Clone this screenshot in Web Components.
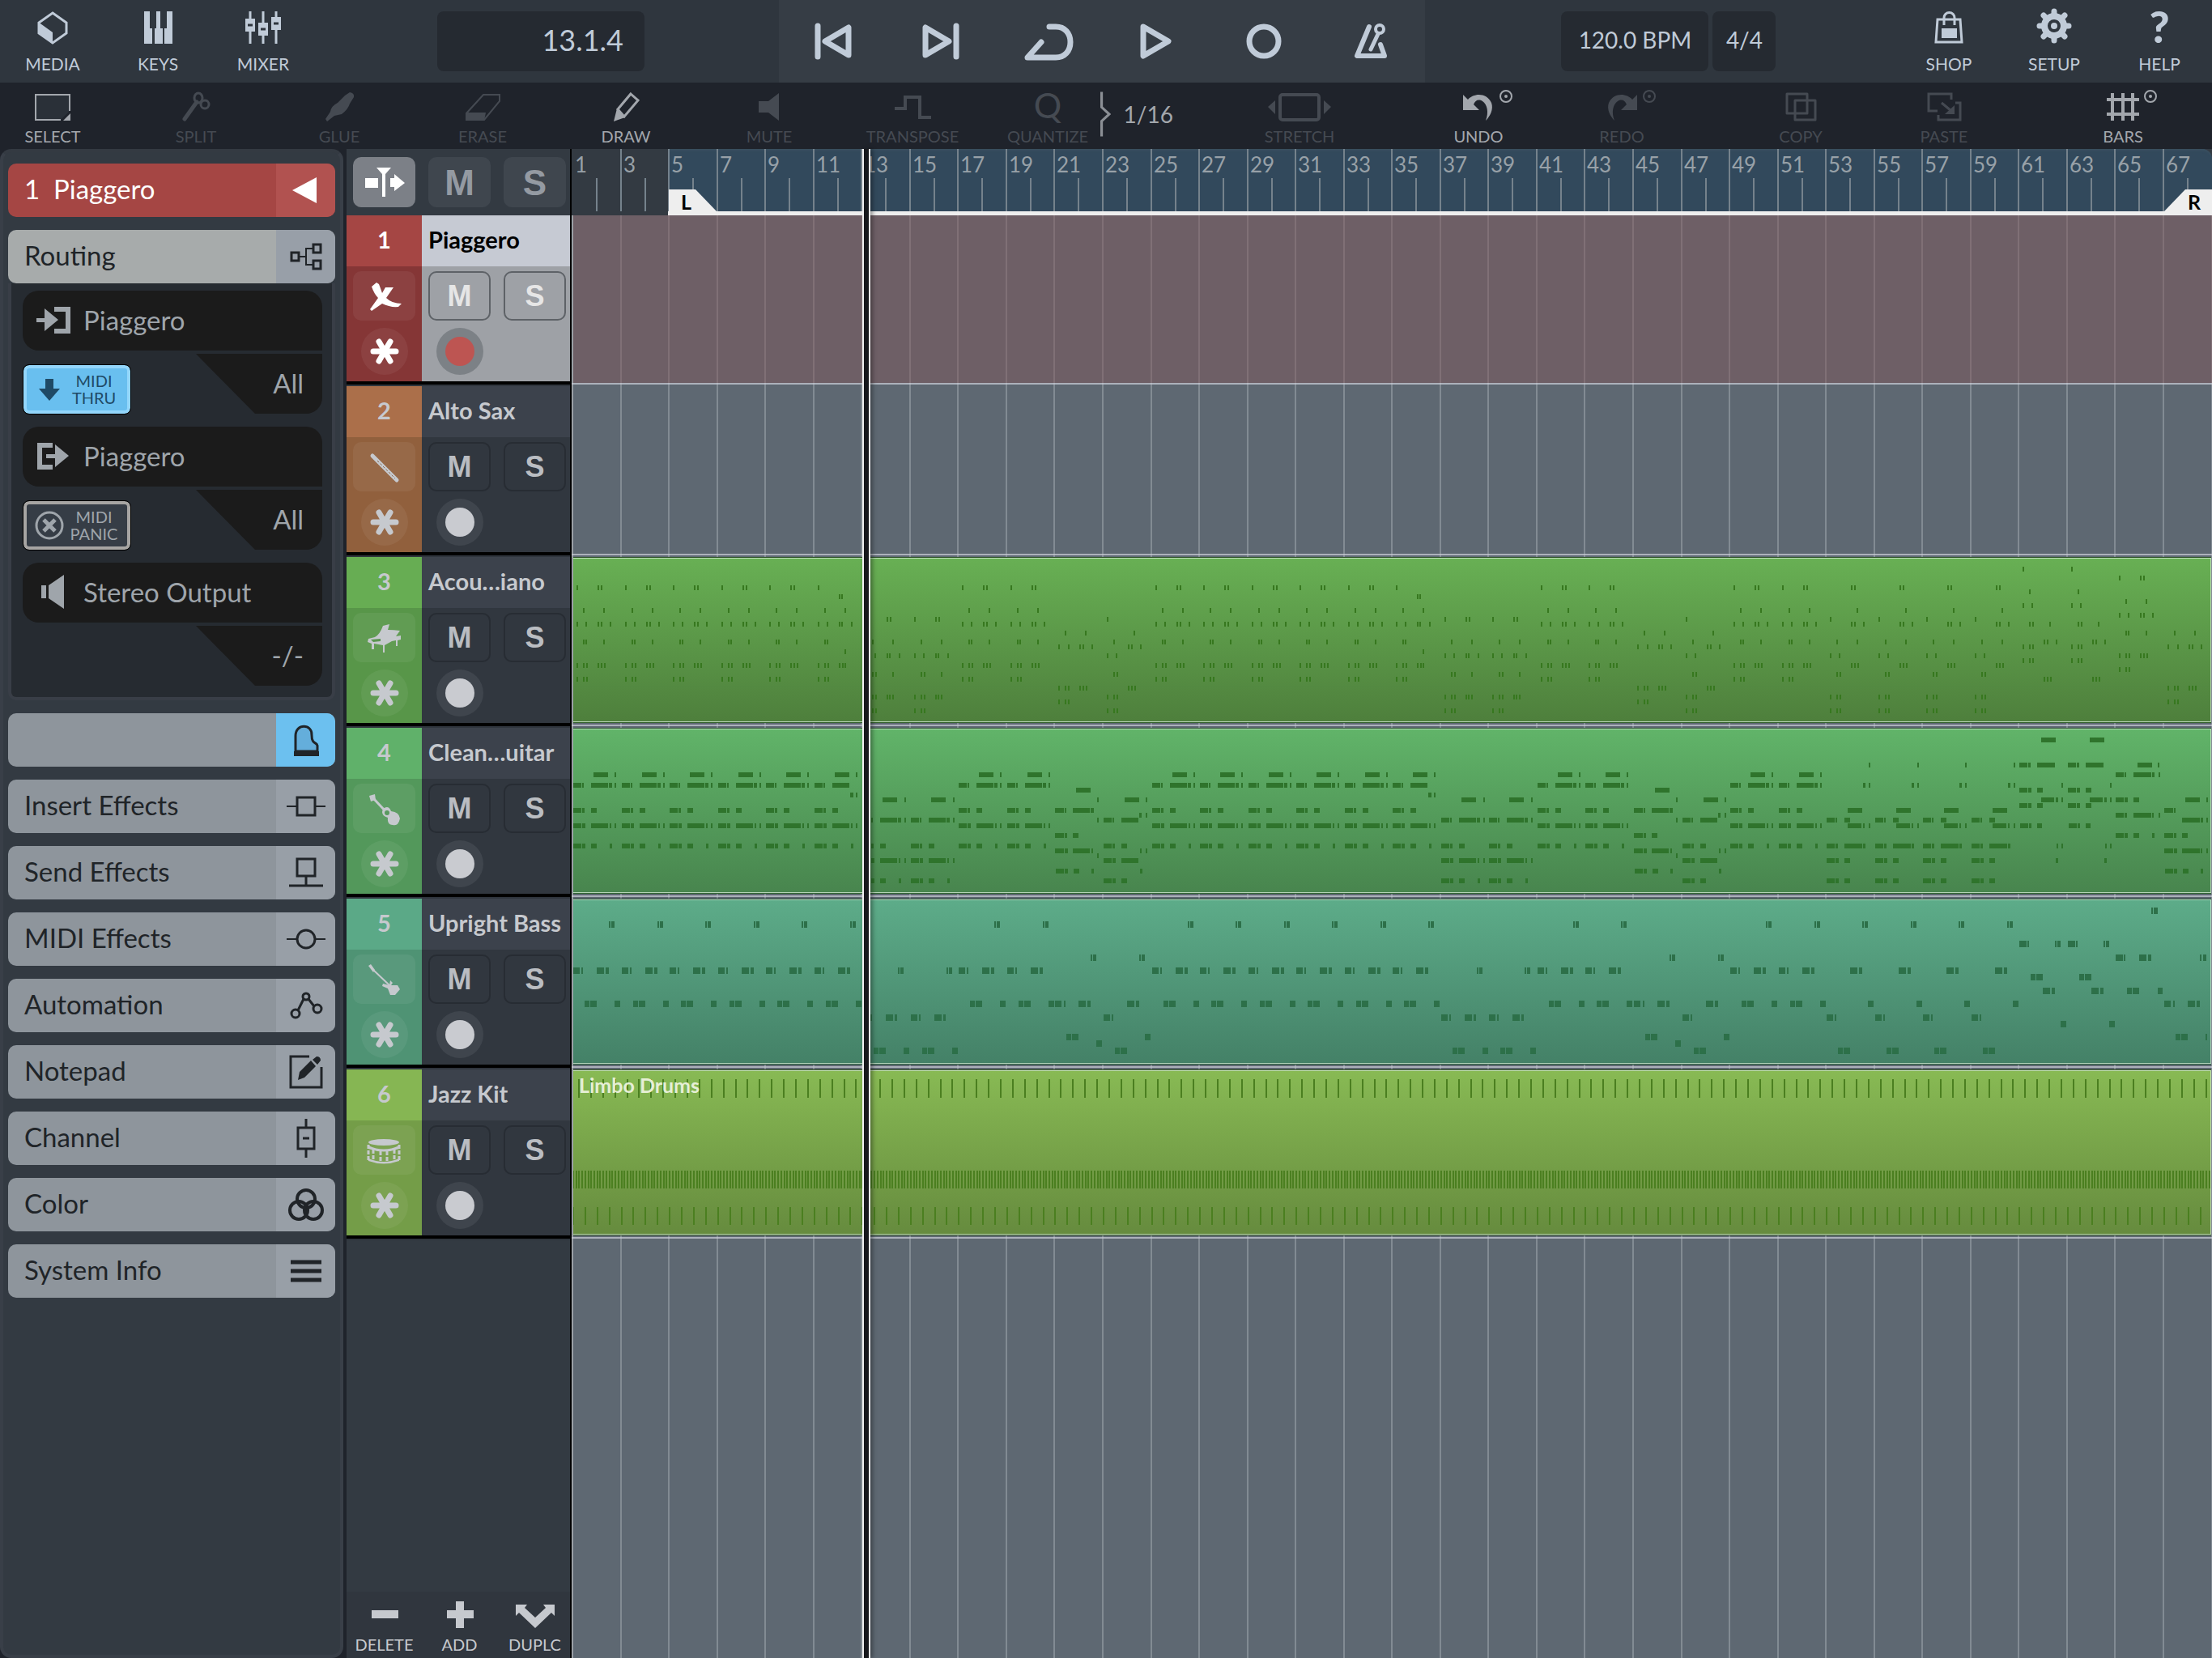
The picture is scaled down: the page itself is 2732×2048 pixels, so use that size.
<!DOCTYPE html>
<html lang="en">
<head>
<meta charset="utf-8">
<title>Arrange</title>
<style>
    html, body { height: 100%; }
    body {
        margin: 0;
        background: #1f232b;
        color: #c0cbd8;
        font-family: Lato, "Open Sans", sans-serif;
        overflow: hidden;
    }
</style>
</head>
<body>
<daw-app></daw-app>

<script>
// every icon: [width, height, markup]
const icons = {
    media: [40, 40, '<path d="M20 2 37 14V27L20 39 3 27V14z" fill="none" stroke="currentColor" stroke-width="3"/><path d="M2 13 20 26V40L2 27z" fill="currentColor"/>'],
    keys: [40, 40, '<path d="M3 0H10V21H13V40H3zM18 0H23V21H26V40H16V21H18zM31 0H38V40H28V21H31z" fill="currentColor"/>'],
    mixer: [44, 40, '<path d="M6 0V40M22 0V40M38 0V40" stroke="currentColor" stroke-width="3"/><path d="M0 9H12V25H0zM16 14H28V30H16zM32 7H44V23H32z" fill="currentColor"/><path d="M3 17H9M19 22H25M35 15H41" stroke="#2f363e" stroke-width="3"/>'],
    prev: [48, 48, '<path d="M5 5V43" stroke="currentColor" stroke-width="7" stroke-linecap="round"/><path d="M14 24 43 7V41z" fill="none" stroke="currentColor" stroke-width="7" stroke-linejoin="round"/>'],
    next: [48, 48, '<path d="M43 5V43" stroke="currentColor" stroke-width="7" stroke-linecap="round"/><path d="M34 24 5 7V41z" fill="none" stroke="currentColor" stroke-width="7" stroke-linejoin="round"/>'],
    loop: [64, 48, '<path d="M33 6H41C52 6 59 14 59 25S52 44 41 44H6L23 25" fill="none" stroke="currentColor" stroke-width="7" stroke-linecap="round" stroke-linejoin="round"/>'],
    play: [48, 48, '<path d="M8 6 39 24 8 42z" fill="none" stroke="currentColor" stroke-width="7" stroke-linejoin="round"/>'],
    record: [48, 48, '<circle cx="24" cy="24" r="18" fill="none" stroke="currentColor" stroke-width="7"/>'],
    metronome: [48, 48, '<path d="M21 6 6 42H40L35 28" fill="none" stroke="currentColor" stroke-width="6" stroke-linecap="round" stroke-linejoin="round"/><circle cx="34" cy="9" r="5" fill="none" stroke="currentColor" stroke-width="4"/><path d="M32 15 23 34" stroke="currentColor" stroke-width="5" stroke-linecap="round"/>'],
    shop: [40, 40, '<path d="M6 10H34L36 38H4z" fill="none" stroke="currentColor" stroke-width="3"/><path d="M14 17V8A6 6 0 0 1 27 8V17" fill="none" stroke="currentColor" stroke-width="3"/><path d="M11 21H30V33H11z" fill="currentColor"/>'],
    setup: [44, 44, '<circle cx="22" cy="22" r="12" fill="none" stroke="currentColor" stroke-width="8"/><path d="M22 4V9M22 35V40M4 22H9M35 22H40M9 9 12 12M32 32 35 35M35 9 32 12M12 32 9 35" stroke="currentColor" stroke-width="7" stroke-linecap="round"/><circle cx="22" cy="22" r="4" fill="currentColor"/>'],
    help: [40, 40, '<text x="20" y="39" text-anchor="middle" font-size="54" font-weight="900" fill="currentColor">?</text>'],

    select: [48, 36, '<path d="M2 2H46V22L34 34H2z" fill="#2a3038"/><path d="M45 23V3H3V34H34" fill="none" stroke="currentColor" stroke-width="2"/><path d="M46 26V35H37z" fill="currentColor"/>'],
    split: [48, 36, '<path d="M25 12 10 33" stroke="currentColor" stroke-width="5" stroke-linecap="round"/><ellipse cx="27" cy="7" rx="5" ry="6" fill="none" stroke="currentColor" stroke-width="3"/><ellipse cx="35" cy="15" rx="5" ry="5" fill="none" stroke="currentColor" stroke-width="3"/>'],
    glue: [48, 36, '<path d="M37 0Q43 1 42 6L37 14Q35 21 27 27L18 29 9 36 7 33 13 24Q14 17 22 13L31 4z" fill="currentColor"/>'],
    erase: [48, 36, '<path d="M25 3H45V11L26 34H4V26z" fill="none" stroke="currentColor" stroke-width="2"/><path d="M4 25H28L26 35H3z" fill="currentColor"/>'],
    draw: [48, 36, '<path d="M30 2 39 10 22 30 14 21z" fill="none" stroke="currentColor" stroke-width="3"/><path d="M13 20 23 31 9 36z" fill="currentColor"/>'],
    mute: [48, 36, '<path d="M11 11H23L36 1V35L23 25H11z" fill="currentColor"/>'],
    transpose: [48, 36, '<path d="M2 20H15V6H33V31H47" fill="none" stroke="currentColor" stroke-width="4"/>'],
    quantize: [48, 36, '<text x="24" y="32" text-anchor="middle" font-size="43" fill="currentColor">Q</text>'],
    stretch: [80, 36, '<rect x="16" y="3" width="48" height="31" rx="3" fill="none" stroke="currentColor" stroke-width="4"/><path d="M10 10V27L1 18zM70 10V27L79 18z" fill="currentColor"/>'],
    undo: [48, 36, '<path d="M5 3 11 9C18 1 34 0 40 13C43 21 38 30 33 35C37 25 35 15 29 11C24 8 20 10 18 15L25 22H5z" fill="currentColor"/><circle cx="58" cy="5" r="7" fill="none" stroke="currentColor" stroke-width="2"/><circle cx="58" cy="5" r="2" fill="currentColor"/>'],
    redo: [48, 36, '<path d="M43 3 37 9C30 1 14 0 8 13C5 21 10 30 15 35C11 25 13 15 19 11C24 8 28 10 30 15L23 22H43z" fill="currentColor"/><circle cx="58" cy="5" r="7" fill="none" stroke="currentColor" stroke-width="2"/><circle cx="58" cy="5" r="2" fill="currentColor"/>'],
    copy: [48, 36, '<path d="M7 2H32V26H7zM17 10H42V34H17z" fill="none" stroke="currentColor" stroke-width="3" stroke-linejoin="round"/>'],
    paste: [48, 36, '<path d="M33 9V2H5V23H16M38 13H44V34H17V28M21 13 33 23" fill="none" stroke="currentColor" stroke-width="3"/><path d="M37 16V27H25z" fill="currentColor"/>'],
    bars: [48, 36, '<path d="M11 1V35M24 1V35M36 1V35M4 9H44M4 27H44" stroke="currentColor" stroke-width="4"/><circle cx="58" cy="5" r="7" fill="none" stroke="currentColor" stroke-width="2"/><circle cx="58" cy="5" r="2" fill="currentColor"/>'],

    back: [30, 32, '<path d="M28 0V32L-2 16z" fill="currentColor"/>'],
    routing: [40, 32, '<path d="M2 11H11V21H2zM29 1H38V11H29zM29 21H38V31H29z" fill="none" stroke="currentColor" stroke-width="3"/><path d="M12 16H20M28 6H20V26H28" fill="none" stroke="currentColor" stroke-width="2"/>'],
    instrument: [36, 40, '<path d="M5 34V15C5 -1 26 0 25 14C25 26 31 22 32 27V34z" fill="#64aedb" stroke="currentColor" stroke-width="3"/><path d="M3 34H34V40H3z" fill="currentColor"/>'],
    insert: [48, 40, '<path d="M13 9H35V31H13z" fill="none" stroke="currentColor" stroke-width="3"/><path d="M0 20H13M35 20H48" stroke="currentColor" stroke-width="2"/>'],
    send: [48, 40, '<path d="M13 3H35V24H13zM24 24V36" fill="none" stroke="currentColor" stroke-width="3"/><path d="M3 36H45" stroke="currentColor" stroke-width="3"/>'],
    midi: [48, 40, '<circle cx="24" cy="20" r="11" fill="none" stroke="currentColor" stroke-width="3"/><path d="M0 20H13M35 20H48" stroke="currentColor" stroke-width="2"/>'],
    automation: [40, 40, '<g fill="none" stroke="currentColor" stroke-width="3"><circle cx="20" cy="9" r="4"/><circle cx="7" cy="30" r="5"/><circle cx="34" cy="24" r="5"/><path d="M17 12 10 26M23 12 30 21"/></g>'],
    notepad: [40, 40, '<path d="M24 1H1V39H39V14" fill="none" stroke="currentColor" stroke-width="3"/><path d="M10 30 12 20 26 6 32 13 18 27zM28 5 33 1Q38 1 38 6L34 11z" fill="currentColor"/>'],
    channel: [40, 48, '<path d="M10 11H30V37H10z" fill="none" stroke="currentColor" stroke-width="3"/><path d="M20 0V11M20 37V48M16 24H24" stroke="currentColor" stroke-width="3"/>'],
    color: [44, 40, '<g fill="none" stroke="currentColor" stroke-width="4"><circle cx="22" cy="13" r="11"/><circle cx="13" cy="27" r="11"/><circle cx="31" cy="27" r="11"/></g>'],
    info: [38, 28, '<path d="M0 3H38M0 14H38M0 25H38" stroke="currentColor" stroke-width="5"/>'],

    input: [42, 34, '<path d="M22 4H39V31H22" fill="none" stroke="currentColor" stroke-width="6"/><path d="M0 15H10V3L27 17 10 31V20H0z" fill="currentColor"/>'],
    output: [42, 34, '<path d="M20 4H4V31H20" fill="none" stroke="currentColor" stroke-width="6"/><path d="M12 15H23V3L40 17 23 31V20H12z" fill="currentColor"/>'],
    speaker: [42, 42, '<path d="M6 13H12V29H6zM15 13 34 0V42L15 29z" fill="currentColor"/>'],
    down: [36, 36, '<path d="M13 5H23V17H31L18 32 5 17H13z" fill="currentColor"/>'],
    panic: [36, 36, '<circle cx="18" cy="18" r="16" fill="none" stroke="currentColor" stroke-width="3"/><path d="M11 11 25 25M25 11 11 25" stroke="currentColor" stroke-width="5"/>'],

    follow: [76, 60, '<path d="M15 25H31V37H15zM46 25H51V20L64 31 51 41V36H46zM29 12H47L40 20V48H36V20z" fill="currentColor"/>'],
    synth: [76, 60, '<path d="M29 13 23 18Q26 27 31 32L21 46 23 48 36 39Q46 44 56 43L60 39Q48 39 41 32L50 19H40L36 26Q34 20 32 15z" fill="currentColor"/>'],
    flute: [76, 60, '<path d="M24 16 54 46" stroke="currentColor" stroke-width="5" stroke-linecap="round"/><path d="M30 22 52 44" stroke="#8c6a50" stroke-width="1" stroke-dasharray="3 2"/>'],
    piano: [76, 60, '<path d="M45 13 37 15Q33 26 27 29L19 31 18 35 23 37V44H26V37L37 39V48H39V39L48 34 53 33V40H55V33L59 32V27L53 28 58 21Q50 20 43 20z" fill="currentColor"/><path d="M22 32 34 31V34L25 35z" fill="#5a9550"/>'],
    guitar: [76, 60, '<path d="M20 14 27 12 28 19 22 21z" fill="currentColor"/><path d="M25 17 41 34" stroke="currentColor" stroke-width="3"/><path d="M37 30Q44 25 47 33Q57 34 58 42Q56 52 49 50Q42 50 43 41Q36 39 36 34z" fill="currentColor"/><circle cx="42" cy="35" r="3" fill="#5a9a60"/>'],
    bass: [76, 60, '<path d="M19 13 22 11 27 18 25 21z" fill="currentColor"/><path d="M25 18 46 38" stroke="currentColor" stroke-width="2"/><path d="M46 31 49 34 47 37 55 37 58 42 52 49H46L43 41 36 38 37 35 45 37z" fill="currentColor"/>'],
    drum: [76, 60, '<ellipse cx="38" cy="20" rx="19" ry="4" fill="currentColor"/><path d="M19 24Q38 33 57 24V28Q38 35 19 28zM19 40Q38 48 57 40V43Q38 50 19 43z" fill="currentColor"/><path d="M19 23V43M25 29V43M34 31V44M42 31V44M51 29V43M57 23V43" stroke="currentColor" stroke-width="3" stroke-dasharray="5 2"/>'],
    star: [58, 58, '<path d="M15 29H43M22 17 36 41M36 17 22 41" stroke="currentColor" stroke-width="7" stroke-linecap="round"/>'],
    minus: [48, 40, '<path d="M8 14H41V24H8z" fill="currentColor"/>'],
    plus: [48, 40, '<path d="M8 14H19V3H29V14H41V24H29V36H19V24H8z" fill="currentColor"/>'],
    fork: [48, 40, '<path d="M0 7H14L11 11 24 23 37 11 34 7H48V21L44 17 24 36 4 17 0 21z" fill="currentColor"/>']
};

class BaseElement extends HTMLElement {
    constructor() {
        super();
        this.attachShadow({ mode: 'open' });
    }
    connectedCallback() {
        this.render();
    }
    render() {
        const template = document.createElement('template');
        template.innerHTML = `
            <style>
                * { box-sizing: border-box; }
                button { margin: 0; padding: 0; border: 0; background: none; color: inherit; font: inherit; }
                ${this.getStyles()}
            </style>
            ${this.getTemplate()}
        `;
        this.shadowRoot.appendChild(template.content.cloneNode(true));
    }
    getStyles() {
        return '';
    }
    getTemplate() {
        return '<slot></slot>';
    }
    attr(name) {
        return this.getAttribute(name) || '';
    }
}

class DawIcon extends BaseElement {
    getStyles() {
        return `
            :host { display: block; flex: none; }
            svg { display: block; overflow: visible; font-family: inherit; }
        `;
    }
    getTemplate() {
        const [w, h, markup] = icons[this.attr('name')];
        return `<svg width="${w}" height="${h}" viewBox="0 0 ${w} ${h}" aria-hidden="true">${markup}</svg>`;
    }
}

// icon over a small caption, used in both top bars and under the track list
class IconButton extends BaseElement {
    getStyles() {
        return `
            :host { display: block; flex: none; width: var(--width, 130px); font-size: 21px; line-height: 24px; }
            :host([off]) { color: #454a52; }
            button {
                display: flex;
                flex-direction: column;
                align-items: center;
                justify-content: flex-end;
                gap: var(--gap, 13px);
                width: 100%;
                height: 100%;
            }
        `;
    }
    getTemplate() {
        return `<button ${this.hasAttribute('off') ? 'disabled' : ''}><daw-icon name="${this.attr('icon')}"></daw-icon><slot></slot></button>`;
    }
}

class AppHeader extends BaseElement {
    getStyles() {
        return `
            :host { display: flex; height: 102px; background: #2f363e; }
            .side { display: flex; flex: 106 1 0; align-items: stretch; }
            .side:last-child { flex-grow: 107; }
            .buttons { display: flex; padding-bottom: 11px; }
            .transport { display: flex; flex: none; background: #363d45; }
            .transport button { display: flex; width: 133px; align-items: center; justify-content: center; }
            .display {
                height: 74px;
                margin-top: 14px;
                padding: 0 26px 5px;
                border-radius: 8px;
                background: #252a31;
                font-size: 28px;
                line-height: 66px;
            }
            .counter { width: 256px; margin-left: 150px; text-align: right; font-size: 36px; }
            .tempo { width: 182px; margin-left: 168px; padding: 0 0 5px; }
            .meter { width: 78px; margin-left: 5px; padding: 0 0 5px; }
            .right { margin-left: auto; }
        `;
    }
    getTemplate() {
        return `
            <div class="side">
                <div class="buttons">
                    <icon-button icon="media">MEDIA</icon-button>
                    <icon-button icon="keys">KEYS</icon-button>
                    <icon-button icon="mixer">MIXER</icon-button>
                </div>
                <button class="display counter">13.1.4</button>
            </div>
            <div class="transport">
                <button aria-label="Previous"><daw-icon name="prev"></daw-icon></button>
                <button aria-label="Next"><daw-icon name="next"></daw-icon></button>
                <button aria-label="Cycle"><daw-icon name="loop"></daw-icon></button>
                <button aria-label="Play"><daw-icon name="play"></daw-icon></button>
                <button aria-label="Record"><daw-icon name="record"></daw-icon></button>
                <button aria-label="Metronome"><daw-icon name="metronome"></daw-icon></button>
            </div>
            <div class="side">
                <button class="display tempo">120.0 BPM</button>
                <button class="display meter">4/4</button>
                <div class="buttons right">
                    <icon-button icon="shop">SHOP</icon-button>
                    <icon-button icon="setup">SETUP</icon-button>
                    <icon-button icon="help">HELP</icon-button>
                </div>
            </div>
        `;
    }
}

class ToolBar extends BaseElement {
    getStyles() {
        return `
            :host {
                display: flex;
                justify-content: space-between;
                height: 82px;
                padding: 0 45px 4px 0;
                color: #a3a7ad;
                --gap: 6px;
            }
            .group { display: flex; gap: 47px; }
            icon-button { font-size: 20px; }
            .quantize { --width: 110px; }
            .value { display: flex; align-items: center; gap: 16px; width: 90px; margin-left: -37px; font-size: 28px; }
        `;
    }
    getTemplate() {
        return `
            <div class="group">
                <icon-button icon="select">SELECT</icon-button>
                <icon-button icon="split" off>SPLIT</icon-button>
                <icon-button icon="glue" off>GLUE</icon-button>
                <icon-button icon="erase" off>ERASE</icon-button>
                <icon-button icon="draw">DRAW</icon-button>
                <icon-button icon="mute" off>MUTE</icon-button>
                <icon-button icon="transpose" off>TRANSPOSE</icon-button>
                <icon-button class="quantize" icon="quantize" off>QUANTIZE</icon-button>
                <button class="value">
                    <svg width="16" height="72" viewBox="0 0 16 72" aria-hidden="true"><path d="M2 1V25L14 36 2 47V71" fill="none" stroke="#8b8f95" stroke-width="4"/></svg>
                    1/16
                </button>
            </div>
            <icon-button icon="stretch" off>STRETCH</icon-button>
            <div class="group">
                <icon-button icon="undo">UNDO</icon-button>
                <icon-button icon="redo" off>REDO</icon-button>
            </div>
            <div class="group">
                <icon-button icon="copy" off>COPY</icon-button>
                <icon-button icon="paste" off>PASTE</icon-button>
            </div>
            <icon-button icon="bars">BARS</icon-button>
        `;
    }
}

class PanelButton extends BaseElement {
    getStyles() {
        return `
            :host { display: block; color: #202428; --bg: #8e959c; --cap: #989fa7; }
            :host([kind=track]) { color: #fff; --bg: #a54644; --cap: #b15250; }
            :host([kind=open]) { --bg: #a7abab; --cap: #989fa8; }
            :host([kind=active]) { --cap: #6cc0ef; }
            button {
                display: flex;
                width: 100%;
                height: 66px;
                border-radius: 10px;
                background: var(--bg);
                overflow: hidden;
                font-size: 33px;
                line-height: 62px;
                text-align: left;
                white-space: nowrap;
            }
            .label { flex: 1; padding-left: 20px; }
            .cap { display: grid; place-items: center; width: 73px; height: 100%; background: var(--cap); }
        `;
    }
    getTemplate() {
        return `<button aria-label="${this.attr('label')}"><span class="label"><slot></slot></span><span class="cap"><daw-icon name="${this.attr('icon')}"></daw-icon></span></button>`;
    }
}

class RouteSlot extends BaseElement {
    getStyles() {
        return `
            :host { display: block; color: #9fa5ab; }
            button { font-size: 33px; line-height: 64px; }
            .target {
                display: flex;
                align-items: center;
                gap: 16px;
                width: 100%;
                height: 74px;
                padding-bottom: 2px;
                padding-left: 17px;
                border-radius: 20px 20px 0 20px;
                background: #1b1b1b;
            }
            .row { display: flex; justify-content: space-between; align-items: flex-end; height: 74px; margin-top: 4px; }
            .channel {
                width: 156px;
                height: 74px;
                margin-left: auto;
                padding-right: 23px;
                padding-bottom: 3px;
                border-radius: 0 0 20px 0;
                background: #1b1b1b;
                clip-path: polygon(0 0, 100% 0, 100% 100%, 73px 100%);
                text-align: right;
            }
        `;
    }
    getTemplate() {
        return `
            <button class="target"><daw-icon name="${this.attr('icon')}"></daw-icon>${this.attr('target')}</button>
            <div class="row"><slot></slot><button class="channel">${this.attr('channel')}</button></div>
        `;
    }
}

class MidiSwitch extends BaseElement {
    getStyles() {
        return `
            :host { display: block; }
            button {
                display: flex;
                align-items: center;
                gap: 7px;
                width: 132px;
                height: 60px;
                margin-left: 1px;
                padding-left: 10px;
                border: 4px solid #a7a5a3;
                border-radius: 7px;
                outline: 1px solid #000;
                background: #363d46;
                color: #9fa5ab;
                font-size: 20px;
                line-height: 21px;
            }
            :host([on]) button { border-color: #93d6fb; background: #69bfef; color: #1f4a66; }
            span { width: 60px; text-align: center; }
        `;
    }
    getTemplate() {
        return `<button><daw-icon name="${this.attr('icon')}"></daw-icon><span><slot></slot></span></button>`;
    }
}

class InspectorPanel extends BaseElement {
    getStyles() {
        return `
            :host {
                display: flex;
                flex-direction: column;
                gap: 16px;
                flex: none;
                width: 424px;
                padding: 14px 6px;
                border: 4px solid #393f48;
                border-top-color: #343a42;
                border-radius: 14px;
                background: #333a42;
            }
            .routing {
                display: flex;
                flex-direction: column;
                gap: 16px;
                margin-top: -16px;
                padding: 9px 12px 14px 14px;
                border: 4px solid #393e47;
                border-top: 0;
                border-radius: 0 0 10px 10px;
                background: #262b31;
            }
        `;
    }
    getTemplate() {
        return `
            <panel-button kind="track" icon="back">1&nbsp; Piaggero</panel-button>
            <panel-button kind="open" icon="routing">Routing</panel-button>
            <div class="routing">
                <route-slot icon="input" target="Piaggero" channel="All"><midi-switch icon="down" on>MIDI THRU</midi-switch></route-slot>
                <route-slot icon="output" target="Piaggero" channel="All"><midi-switch icon="panic">MIDI PANIC</midi-switch></route-slot>
                <route-slot icon="speaker" target="Stereo Output" channel="-/-"></route-slot>
            </div>
            <panel-button kind="active" icon="instrument" label="Instrument"></panel-button>
            <panel-button icon="insert">Insert Effects</panel-button>
            <panel-button icon="send">Send Effects</panel-button>
            <panel-button icon="midi">MIDI Effects</panel-button>
            <panel-button icon="automation">Automation</panel-button>
            <panel-button icon="notepad">Notepad</panel-button>
            <panel-button icon="channel">Channel</panel-button>
            <panel-button icon="color">Color</panel-button>
            <panel-button icon="info">System Info</panel-button>
        `;
    }
}

class TrackRow extends BaseElement {
    getStyles() {
        return `
            :host {
                display: grid;
                grid-template-columns: 93px 1fr;
                grid-template-rows: 63px 142px;
                height: 211px;
                border-bottom: 2px solid #2f353d;
                color: #c6c9ce;
                font-size: 29px;
                font-weight: 700;
                line-height: 60px;
                box-shadow: inset 0 -4px #000;
            }
            .number { background: var(--light); text-align: center; }
            .name { padding-left: 8px; background: #3c424c; white-space: nowrap; }
            .marks { display: grid; justify-items: center; align-content: start; gap: 9px; padding-top: 6px; background: var(--dark); }
            .tile { height: 61px; width: 77px; border-radius: 10px; background: rgba(255, 255, 255, .06); }
            .star { height: 58px; width: 58px; border-radius: 50%; background: rgba(255, 255, 255, .06); }
            .controls {
                display: grid;
                grid-template-columns: 77px 77px;
                gap: 9px 16px;
                align-content: start;
                padding: 6px 5px 6px 8px;
                background: #31373f;
            }
            .ms {
                height: 61px;
                border: 2px solid #272c33;
                border-radius: 10px;
                font: 700 36px/57px "Liberation Sans Narrow", "Liberation Sans", sans-serif;
                color: #babdc2;
            }
            .rec { width: 58px; height: 58px; border-radius: 50%; justify-self: center; background: #3f454d; padding: 11px; }
            .rec i { display: block; width: 36px; height: 36px; border-radius: 50%; background: #c9cbd0; }
            :host([selected]) { color: #fff; }
            :host([selected]) .name { background: #c6cad3; color: #000; }
            :host([selected]) .controls { background: #9ea1a6; }
            :host([selected]) .ms { border-color: #5e6267; color: #e6e6e6; }
            :host([selected]) .rec { background: #7c8186; }
            :host([selected]) .rec i { background: #bd5552; }
        `;
    }
    getTemplate() {
        return `
            <div class="number">${this.attr('number')}</div>
            <div class="name"><slot></slot></div>
            <div class="marks">
                <button class="tile" aria-label="Instrument"><daw-icon name="${this.attr('icon')}"></daw-icon></button>
                <button class="star" aria-label="Freeze"><daw-icon name="star"></daw-icon></button>
            </div>
            <div class="controls">
                <button class="ms">M</button>
                <button class="ms">S</button>
                <button class="rec" aria-label="Arm"><i></i></button>
            </div>
        `;
    }
}

class TrackList extends BaseElement {
    getStyles() {
        return `
            :host { display: flex; flex-direction: column; flex: none; width: 276px; margin-left: 4px; background: #333a42; }
            .head { display: flex; gap: 16px; height: 82px; padding: 10px 5px 10px 8px; }
            .head button {
                width: 77px;
                border-radius: 10px;
                background: #3f464e;
                color: #949aa2;
                font: 700 44px/61px "Liberation Sans Narrow", "Liberation Sans", sans-serif;
            }
            .head .follow { background: #7c8087; color: #fff; }
            .foot {
                display: flex;
                height: 82px;
                margin-top: auto;
                padding-bottom: 5px;
                background: #30363e;
                color: #c6c9ce;
                --width: 93px;
                --gap: 4px;
            }
            .foot icon-button { font-size: 20px; }
            track-row:nth-of-type(1) { --light: #a54644; --dark: #853636; }
            track-row:nth-of-type(2) { --light: #ab6f4a; --dark: #91603d; }
            track-row:nth-of-type(3) { --light: #67ad53; --dark: #589649; }
            track-row:nth-of-type(4) { --light: #60b16a; --dark: #53985b; }
            track-row:nth-of-type(5) { --light: #5ba987; --dark: #4f9374; }
            track-row:nth-of-type(6) { --light: #86b653; --dark: #749d48; }
        `;
    }
    getTemplate() {
        return `
            <div class="head">
                <button class="follow" aria-label="Follow"><daw-icon name="follow"></daw-icon></button>
                <button>M</button>
                <button>S</button>
            </div>
            <track-row number="1" icon="synth" selected>Piaggero</track-row>
            <track-row number="2" icon="flute">Alto Sax</track-row>
            <track-row number="3" icon="piano">Acou…iano</track-row>
            <track-row number="4" icon="guitar">Clean…uitar</track-row>
            <track-row number="5" icon="bass">Upright Bass</track-row>
            <track-row number="6" icon="drum">Jazz Kit</track-row>
            <div class="foot">
                <icon-button icon="minus">DELETE</icon-button>
                <icon-button icon="plus">ADD</icon-button>
                <icon-button icon="fork">DUPLC</icon-button>
            </div>
        `;
    }
}

// width of two bars
const STEP = 1965 / 33;
const SONG = 'AAAAAaBBAACDAAAAAaBBAACDAAEEEEFFGH';

// each phrase is two bars in two halves: row -> note starts (or start-end)
const parts = {
    piano: {
        top: 15, row: 5.65, height: 6, fill: '#37781f',
        halves: {
            A1: '4:5 9:13 12:5,16 16:13,16 21:5,13,17 24:5,13,17',
            A2: '4:31,35 9:38 12:31,35,46 16:38 21:31,35,39',
            a2: '6:31,34 9:38 12:31,34,46 18:38 21:31,35,38',
            B1: '11:5 16:13 19:5,16 23:13,17 28:5,13,17 31:5,13,17',
            B2: '11:31,35 16:38 19:31,34,46 23:38 28:31,34,38',
            C1: '14:13 17:5,17 26:5,13,17 29:5,13,17',
            C2: '14:38 17:31,35,46 26:31,35,39',
            F1: '0:5 5:13 8:5,16 12:13,17 17:5,13,17 20:5,13,17',
            F2: '12:38 16:31,35,46 24:31,35,39',
            G1: '2:5 7:13 10:5,16 14:13,16 19:5,13,17 22:5,13,17',
            G2: '2:31,35 7:38 10:31,35,46 14:38 19:31,35,39'
        }
    },
    guitar: {
        top: 14.7, row: 6.23, height: 6, fill: '#2f742c',
        halves: {
            A1: '9:1-11,12-14 14:1-11,12-15 17:1-11,12-16 21:1-11,12-16',
            A2: '7:26-44,52-54 9:23-44,45-49,52-54 14:23-30 17:23-44,46-48,52-54 21:23-30,46-49',
            a2: '7:26-44,52-54 9:23-44 11:45-49,52-54 14:23-30 17:23-44,46-48,52-54 21:23-30,46-49',
            B1: '16:1-11,12-14 21:1-11,12-15 24:1-11,12-16 28:1-11,12-16',
            B2: '12:26-44,53-55 16:23-44,45-49,53-55 21:23-30 24:23-44,46-48,53-55 28:23-30,46-49',
            C1: '14:1-12,13-15 19:1-12,13-16 22:1-12,13-17 26:2-12,13-17',
            C2: '10:27-45 12:53-55 14:23-44,45-49 16:53-55 19:23-30 22:23-44,46-48 23:53-55 26:24-31,46-49',
            D2: '12:27-45,53-55 15:45-48,53-55 16:23-44 21:23-30 22:46-48,53-55 24:23-44 26:46-49 28:23-30',
            E2: '5:53-55 9:46-49,53-55 14:27-45 16:23-30 17:27-44,46-48,53-55 21:23-45,46-49 24:23-30 28:23-30',
            F1: '5:1-11,12-15 10:1-11,12-16 13:1-11,12-16 17:2-12,13-16',
            F2: '0:28-46 5:23-45 9:53-55 10:23-30 12:28-44,46-49,53-55 13:23-30 17:23-29 21:47-49,53-55 24:46-49',
            G1: '7:1-11,12-14 12:1-11,12-16 15:1-11,12-15 19:1-11,12-16',
            G2: '5:28-46,53-55 7:23-45,46-49,54-56 12:23-30 15:23-45,46-48,54-56 19:23-30,46-49',
            H2: '12:27-45,53-55 16:23-45,46-49,53-55 19:23-30 22:23-45,46-48,53-55 26:24-31,46-49'
        }
    },
    bass: {
        top: 15.4, row: 8.2, height: 8, fill: '#2d7049',
        halves: {
            A1: '9:1-9,11-13 14:15-21,22-30',
            A2: '2:45-47,48-52 9:30-39,41-45 14:52-59',
            B1: '16:1-9,11-13 21:15-21,22-30',
            B2: '9:45-47,48-52 16:30-39,41-44 21:52-59',
            C1: '14:1-9,12-14 19:15-21,22-30',
            C2: '7:45-47,48-52 14:30-39,41-45 20:52-59',
            D2: '7:45-47,48-52 14:30-39,41-45 19:52-59',
            F1: '5:1-10,11-13 10:15-21,22-30',
            F2: '5:45-47,48-52 12:30-39,41-45 17:52-59',
            G1: '7:1-10,11-13 12:15-21,22-30',
            G2: '0:45-47,48-53 7:30-39,41-45 12:53-59',
            H2: '7:45-47,49-53 14:30-39,41-45 19:52-54'
        }
    }
};
const blocks = { A: 'A1 A2', a: 'A1 a2', B: 'B1 B2', C: 'C1 C2', D: 'B1 D2', E: 'B1 E2', F: 'F1 F2', G: 'G1 G2', H: 'C1 H2' };
// parts that reuse another half instead of their own
const same = { a2: 'A2', D2: 'C2', E2: 'A2', H2: 'C2' };

function rect(x, y, w, h) {
    return `<rect x="${Math.round(x)}" y="${Math.round(y)}" width="${w}" height="${h}"/>`;
}

class MidiClip extends BaseElement {
    getStyles() {
        return `
            :host {
                display: block;
                position: relative;
                height: 205px;
                border-top: 1px solid rgba(20, 50, 20, .6);
                border-bottom: 1px solid rgba(20, 50, 20, .6);
                background: linear-gradient(var(--light), var(--dark));
            }
            :host::after { content: ""; position: absolute; inset: 0; border: solid rgba(225, 245, 225, .7); border-width: 1px 1px 1px 0; }
            svg { display: block; width: 100%; height: 100%; shape-rendering: crispEdges; }
            .title { position: absolute; left: 7px; top: 4px; color: #e6efd6; font-size: 25px; font-weight: 700; line-height: 28px; }
        `;
    }
    drums() {
        let out = '';
        for (let i = 0; i < SONG.length * 4; i++) {
            out += rect(6 + i * STEP / 4, 11, 2, 23) + rect(-1 + i * STEP / 4, 169, 2, 22);
        }
        for (let i = 0; i < SONG.length * 16; i++) {
            out += rect(-1 + i * STEP / 16, 124, 2, 22);
        }
        return `<g fill="#4b7f20">${out}</g>`;
    }
    notes(part) {
        let out = '';
        [...SONG].forEach((letter, i) => {
            for (const half of blocks[letter].split(' ')) {
                const phrase = part.halves[half] || part.halves[same[half]];
                for (const line of phrase.split(' ')) {
                    const [row, list] = line.split(':');
                    for (const note of list.split(',')) {
                        const [from, to = +from + 2] = note.split('-');
                        out += rect(i * STEP + +from - 1, part.top + row * part.row - part.height / 2 - 1, to - from, part.height);
                    }
                }
            }
        });
        return `<g fill="${part.fill}">${out}</g>`;
    }
    getTemplate() {
        const part = this.attr('part-name');
        return `
            <svg aria-hidden="true">${part === 'drums' ? this.drums() : this.notes(parts[part])}</svg>
            <span class="title"><slot></slot></span>
        `;
    }
}

class TimeRuler extends BaseElement {
    getStyles() {
        return `
            :host { display: block; position: relative; height: 82px; overflow: hidden; background: #333a42; }
            svg { display: block; position: relative; width: 100%; height: 100%; font-family: inherit; }
            .range {
                position: absolute;
                inset: 0 0 0 119px;
                border-bottom: 5px solid #eee;
                border-top-right-radius: 12px;
                background: #32495c;
                box-shadow: inset 0 4px 3px -2px #3b5060;
            }
            .flag {
                position: absolute;
                bottom: 0;
                width: 59px;
                height: 32px;
                background: #eee;
                color: #000;
                font-size: 25px;
                font-weight: 700;
                line-height: 30px;
            }
            .left { left: 120px; padding-left: 15px; clip-path: polygon(0 0, 33px 0, 100% 27px, 100% 100%, 0 100%); }
            .right { right: 0; padding-right: 14px; text-align: right; clip-path: polygon(26px 0, 100% 0, 100% 100%, 0 100%, 0 27px); }
        `;
    }
    getTemplate() {
        let ticks = '';
        let numbers = '';
        for (let i = 0; i < 34; i++) {
            const x = Math.round(i * STEP);
            ticks += (i ? rect(x, 0, 2, 77) : '') + rect(x + 30, 36, 2, 41);
            numbers += `<text x="${x + 4}" y="29">${i * 2 + 1}</text>`;
        }
        return `
            <div class="range"></div>
            <svg><g fill="#75828c">${ticks}</g><g fill="#98a1a8" font-size="26">${numbers}</g></svg>
            <span class="flag left">L</span>
            <span class="flag right">R</span>
        `;
    }
}

class ArrangeView extends BaseElement {
    getStyles() {
        return `
            :host {
                display: flex;
                flex-direction: column;
                position: relative;
                flex: 1;
                min-width: 0;
                border-left: 2px solid #000;
                background: #5e6872;
            }
            .lanes { position: relative; flex: 1; box-shadow: inset 2px 0 #9a9fa5; }
            .grid { position: absolute; inset: 0; width: 100%; height: 100%; }
            .lane { position: relative; height: 211px; }
            .lane::after { content: ""; position: absolute; inset: 207px 0 auto 0; height: 2px; background: rgba(205, 208, 218, .7); }
            .lane.selected::before { content: ""; position: absolute; inset: 0 0 4px 2px; background: rgba(126, 86, 90, .5); }
            midi-clip { margin-left: 2px; margin-right: 1px; }
            .playhead {
                position: absolute;
                inset: 0 auto 0 359px;
                width: 10px;
                border: solid #f2f2f2;
                border-width: 0 2px;
                background: #17181c;
                box-shadow: 3px 0 5px rgba(0, 0, 0, .35);
            }
        `;
    }
    getTemplate() {
        let lines = '';
        for (let i = 1; i < 40; i++) {
            lines += `<rect x="${Math.round(i * STEP)}" width="2" height="100%"/>`;
        }
        return `
            <time-ruler></time-ruler>
            <div class="lanes">
                <svg class="grid" fill="#828b93" aria-hidden="true">${lines}</svg>
                <div class="lane selected"></div>
                <div class="lane"></div>
                <div class="lane"><midi-clip part-name="piano" style="--light: #68b054; --dark: #4e7f3c"></midi-clip></div>
                <div class="lane"><midi-clip part-name="guitar" style="--light: #61b469; --dark: #48854e"></midi-clip></div>
                <div class="lane"><midi-clip part-name="bass" style="--light: #5dac89; --dark: #448167"></midi-clip></div>
                <div class="lane"><midi-clip part-name="drums" style="--light: #88ba54; --dark: #668b3e">Limbo Drums</midi-clip></div>
            </div>
            <div class="playhead"></div>
        `;
    }
}

class DawApp extends BaseElement {
    getStyles() {
        return `
            :host { display: flex; flex-direction: column; min-height: 100vh; }
            main { display: flex; flex: 1; }
        `;
    }
    getTemplate() {
        return `
            <app-header></app-header>
            <tool-bar></tool-bar>
            <main>
                <inspector-panel></inspector-panel>
                <track-list></track-list>
                <arrange-view></arrange-view>
            </main>
        `;
    }
}

customElements.define('daw-icon', DawIcon);
customElements.define('icon-button', IconButton);
customElements.define('app-header', AppHeader);
customElements.define('tool-bar', ToolBar);
customElements.define('panel-button', PanelButton);
customElements.define('route-slot', RouteSlot);
customElements.define('midi-switch', MidiSwitch);
customElements.define('inspector-panel', InspectorPanel);
customElements.define('track-row', TrackRow);
customElements.define('track-list', TrackList);
customElements.define('midi-clip', MidiClip);
customElements.define('time-ruler', TimeRuler);
customElements.define('arrange-view', ArrangeView);
customElements.define('daw-app', DawApp);
</script>
</body>
</html>
